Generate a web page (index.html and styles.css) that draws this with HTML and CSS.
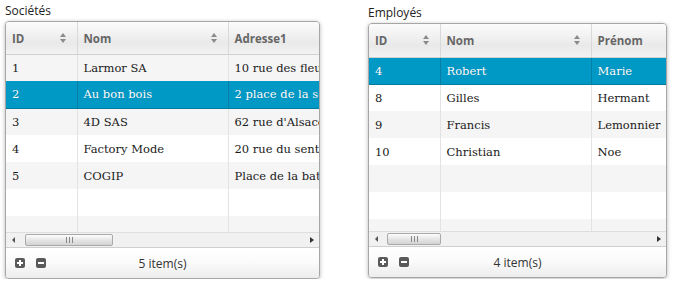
FILE: index.html
```html
<!DOCTYPE html>
<html lang="fr">
<head>
<meta charset="utf-8">
<title>Grilles</title>
<link rel="stylesheet" href="styles.css">
</head>
<body>
<div class="page">
  <section class="panel panel-left">
    <div class="panel-title">Sociétés</div>
    <div class="grid grid-left">
      <div class="grid-body">
        <table class="tbl">
          <colgroup><col class="c-id"><col class="c-nom"><col class="c-3"></colgroup>
          <thead>
            <tr><th><span>ID</span><i class="sort"></i></th><th><span>Nom</span><i class="sort"></i></th><th><span>Adresse1</span></th></tr>
          </thead>
          <tbody>
            <tr class="odd"><td>1</td><td>Larmor SA</td><td>10 rue des fleurs</td></tr>
            <tr class="sel"><td>2</td><td>Au bon bois</td><td>2 place de la seine</td></tr>
            <tr class="odd"><td>3</td><td>4D SAS</td><td>62 rue d'Alsace</td></tr>
            <tr><td>4</td><td>Factory Mode</td><td>20 rue du sentier</td></tr>
            <tr class="odd"><td>5</td><td>COGIP</td><td>Place de la bataille</td></tr>
            <tr><td></td><td></td><td></td></tr>
            <tr class="odd"><td></td><td></td><td></td></tr>
          </tbody>
        </table>
      </div>
      <div class="hscroll">
        <span class="arr arr-l"></span>
        <div class="track"><div class="thumb thumb-left"><span class="grip"></span></div></div>
        <span class="arr arr-r"></span>
      </div>
      <div class="footer">
        <div class="btns"><span class="btn btn-plus"></span><span class="btn btn-minus"></span></div>
        <div class="count">5 item(s)</div>
      </div>
    </div>
  </section>

  <section class="panel panel-right">
    <div class="panel-title">Employés</div>
    <div class="grid grid-right">
      <div class="grid-body">
        <table class="tbl">
          <colgroup><col class="c-id"><col class="c-nom"><col class="c-3r"></colgroup>
          <thead>
            <tr><th><span>ID</span><i class="sort"></i></th><th><span>Nom</span><i class="sort"></i></th><th><span>Prénom</span></th></tr>
          </thead>
          <tbody>
            <tr class="sel"><td>4</td><td>Robert</td><td>Marie</td></tr>
            <tr><td>8</td><td>Gilles</td><td>Hermant</td></tr>
            <tr class="odd"><td>9</td><td>Francis</td><td>Lemonnier</td></tr>
            <tr><td>10</td><td>Christian</td><td>Noe</td></tr>
            <tr class="odd"><td></td><td></td><td></td></tr>
            <tr><td></td><td></td><td></td></tr>
            <tr class="odd"><td></td><td></td><td></td></tr>
          </tbody>
        </table>
      </div>
      <div class="hscroll">
        <span class="arr arr-l"></span>
        <div class="track"><div class="thumb thumb-right"><span class="grip"></span></div></div>
        <span class="arr arr-r"></span>
      </div>
      <div class="footer">
        <div class="btns"><span class="btn btn-plus"></span><span class="btn btn-minus"></span></div>
        <div class="count">4 item(s)</div>
      </div>
    </div>
  </section>
</div>
</body>
</html>
```

FILE: styles.css
```css
* { box-sizing: border-box; }
html, body { margin: 0; padding: 0; background: #fff; }
body { font-family: "Open Sans", "Noto Sans", sans-serif; color: #222; }

.page {
  display: flex;
  align-items: flex-start;
  padding: 2px 0 0 5px;
  gap: 48px;
}
.panel { display: flex; flex-direction: column; }
.panel-left { width: 315px; }
.panel-right { width: 299px; padding-top: 2px; }

.panel-title {
  font-size: 12px;
  line-height: 17px;
  height: 19px;
  color: #222;
}

.grid {
  border: 1px solid #a6a6a6;
  border-radius: 4px;
  box-shadow: 0 1px 4px rgba(0,0,0,0.28);
  overflow: hidden;
  display: flex;
  flex-direction: column;
  background: #fff;
}
.grid-left { height: 258px; }
.grid-right { height: 255px; }

.grid-body { flex: 1; overflow: hidden; position: relative; }

.tbl {
  border-collapse: collapse;
  table-layout: fixed;
  width: 520px;
}
.c-id { width: 71px; }
.c-nom { width: 151px; }
.c-3 { width: 298px; }
.c-3r { width: 298px; }

.tbl th {
  height: 32px;
  padding: 0 6px;
  text-align: left;
  font-family: "Open Sans", "Noto Sans", sans-serif;
  font-weight: bold;
  font-size: 11.5px;
  color: #666;
  background: linear-gradient(#fbfbfb 0%, #f3f3f3 30%, #e9e9e9 65%, #f2f2f2 100%);
  border-bottom: 1px solid #d0d0d0;
  border-right: 1px solid #d9d9d9;
  white-space: nowrap;
  overflow: hidden;
  position: relative;
}
.grid-right .tbl th { height: 33px; }
.tbl th span { vertical-align: middle; }

.sort {
  position: absolute;
  right: 10px;
  top: 50%;
  width: 7px;
  height: 10px;
  margin-top: -5px;
}
.sort::before, .sort::after {
  content: "";
  position: absolute;
  left: 0;
  border-left: 3.5px solid transparent;
  border-right: 3.5px solid transparent;
}
.sort::before { top: 0; border-bottom: 4px solid #8a8a8a; }
.sort::after { bottom: 0; border-top: 4px solid #8a8a8a; }

.tbl td {
  height: 27px;
  padding: 0 6px;
  font-family: "DejaVu Serif", "Liberation Serif", serif;
  font-size: 11.5px;
  color: #1a1a1a;
  border-right: 1px solid #e3e3e3;
  white-space: nowrap;
  overflow: hidden;
}
.tbl tbody tr { background: #fff; }
.tbl tbody tr.odd { background: #f5f5f5; }
.tbl tbody tr.sel { background: #0099c6; }
.tbl tbody tr.sel td {
  color: #fff;
  border-right-color: #0a7fa6;
  border-bottom: 1px solid #007a9e;
  text-shadow: 0 0 1px rgba(0,60,90,0.4);
}

.hscroll {
  height: 16px;
  flex: none;
  display: flex;
  align-items: center;
  background: #f1f1f1;
  border-top: 1px solid #dedede;
  border-bottom: 1px solid #cfcfcf;
}
.arr { width: 14px; height: 14px; position: relative; flex: none; }
.arr::before {
  content: "";
  position: absolute;
  top: 4px;
  border-top: 3.5px solid transparent;
  border-bottom: 3.5px solid transparent;
}
.arr-l::before { left: 6px; border-right: 3px solid #555; }
.arr-r::before { left: 5px; border-left: 4px solid #333; }
.track { flex: 1; height: 14px; position: relative; display: flex; align-items: center; }
.thumb {
  height: 12px;
  border: 1px solid #a9a9a9;
  border-radius: 2px;
  background: linear-gradient(#fdfdfd, #e4e4e4 55%, #d3d3d3);
  display: flex;
  align-items: center;
  justify-content: center;
}
.thumb-left { width: 88px; margin-left: 5px; }
.thumb-right { width: 54px; margin-left: 4px; }
.grip {
  width: 7px;
  height: 6px;
  background: linear-gradient(90deg, #888 0 1px, transparent 1px 3px, #888 3px 4px, transparent 4px 6px, #888 6px 7px);
}

.footer {
  height: 30px;
  flex: none;
  position: relative;
  display: flex;
  align-items: center;
  background: linear-gradient(#ffffff 0%, #fbfbfb 45%, #ededed 100%);
}
.btns { display: flex; gap: 11px; padding-left: 9px; position: relative; z-index: 1; }
.btn {
  width: 10px;
  height: 10px;
  border-radius: 2px;
  background: #5a5a5a;
  position: relative;
}
.btn::before {
  content: "";
  position: absolute;
  left: 2px; right: 2px;
  top: 4px; height: 2px;
  background: #fff;
}
.btn-plus::after {
  content: "";
  position: absolute;
  top: 2px; bottom: 2px;
  left: 4px; width: 2px;
  background: #fff;
}
.count {
  position: absolute;
  left: 0; right: 0;
  text-align: center;
  font-size: 12px;
  color: #333;
}
```
